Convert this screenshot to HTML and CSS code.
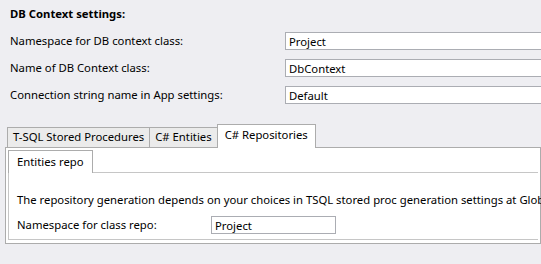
FILE: index.html
```html
<!DOCTYPE html>
<html lang="en">
<head>
	<meta charset="UTF-8">
	<title>DB Context settings</title>
	<link rel="stylesheet" href="styles.css">
</head>
<body>
	<div class="settings">
		<h2 class="title">DB Context settings:</h2>
		<div class="row">
			<label class="label">Namespace for DB context class:</label>
			<input class="field wide" type="text" value="Project">
		</div>
		<div class="row">
			<label class="label">Name of DB Context class:</label>
			<input class="field wide" type="text" value="DbContext">
		</div>
		<div class="row row-last">
			<label class="label">Connection string name in App settings:</label>
			<input class="field wide" type="text" value="Default">
		</div>
	</div>

	<div class="tabs">
		<div class="tab-strip">
			<div class="tab">T-SQL Stored Procedures</div>
			<div class="tab">C# Entities</div>
			<div class="tab tab-on">C# Repositories</div>
		</div>
		<div class="tab-panel">
			<div class="sub-tabs">
				<div class="tab-strip">
					<div class="tab sub-tab tab-on">Entities repo</div>
				</div>
				<div class="sub-panel">
					<p class="note">The repository generation depends on your choices in TSQL stored proc generation settings at Global level.</p>
					<div class="repo-row">
						<label class="repo-label">Namespace for class repo:</label>
						<input class="field short" type="text" value="Project">
					</div>
				</div>
			</div>
		</div>
	</div>
</body>
</html>
```
FILE: styles.css
```css
html, body { margin: 0; padding: 0; }
body {
	width: 541px;
	height: 264px;
	overflow: hidden;
	background: #eeeef2;
	color: #000;
	font-family: "Noto Sans", "Open Sans", sans-serif;
	font-size: 11.3px;
	line-height: 16px;
}

/* top settings block */
.settings { padding: 6px 0 0 10px; }
.title { margin: 0 0 10px 0; font-size: 11.3px; font-weight: bold; line-height: 16px; }
.row { display: flex; align-items: center; margin-bottom: 9px; }
.row-last { margin-top: 1px; margin-bottom: 0; }
.label { width: 275px; flex: none; }

.field {
	box-sizing: border-box;
	height: 18px;
	margin: 0;
	padding: 0 3px;
	border: 1px solid #abadb3;
	background: #fff;
	font: inherit;
	color: #000;
	outline: none;
}
.wide { width: 300px; flex: none; }
.short { width: 125px; }

/* outer tab control */
.tabs { margin: 20px 0 0 5px; }
.tab-strip { display: flex; align-items: flex-end; padding-left: 2px; }
.tab {
	box-sizing: border-box;
	height: 20px;
	padding: 1px 5px 0 5px;
	margin-right: -1px;
	border: 1px solid #acacac;
	border-bottom: none;
	background: #ebebeb;
	white-space: nowrap;
}
.tab-on {
	position: relative;
	height: 24px;
	margin-bottom: -1px;
	padding: 2px 7px 0 7px;
	background: #fff;
}
.tab-panel {
	height: 91px;
	padding: 2px;
	border: 1px solid #acacac;
	background: #fff;
}

/* nested tab control */
.sub-tabs .tab-strip { padding-left: 0; }
.sub-tab { height: 23px; padding: 3px 8px 0 8px; }
.sub-panel {
	height: 66px;
	border: 1px solid #c6c6c6;
	border-right: none;
	padding: 0 0 0 8px;
}
.note { margin: 19px 0 0 0; white-space: nowrap; }
.repo-row { display: flex; align-items: center; margin-top: 8px; }
.repo-label { width: 194px; flex: none; }
```
